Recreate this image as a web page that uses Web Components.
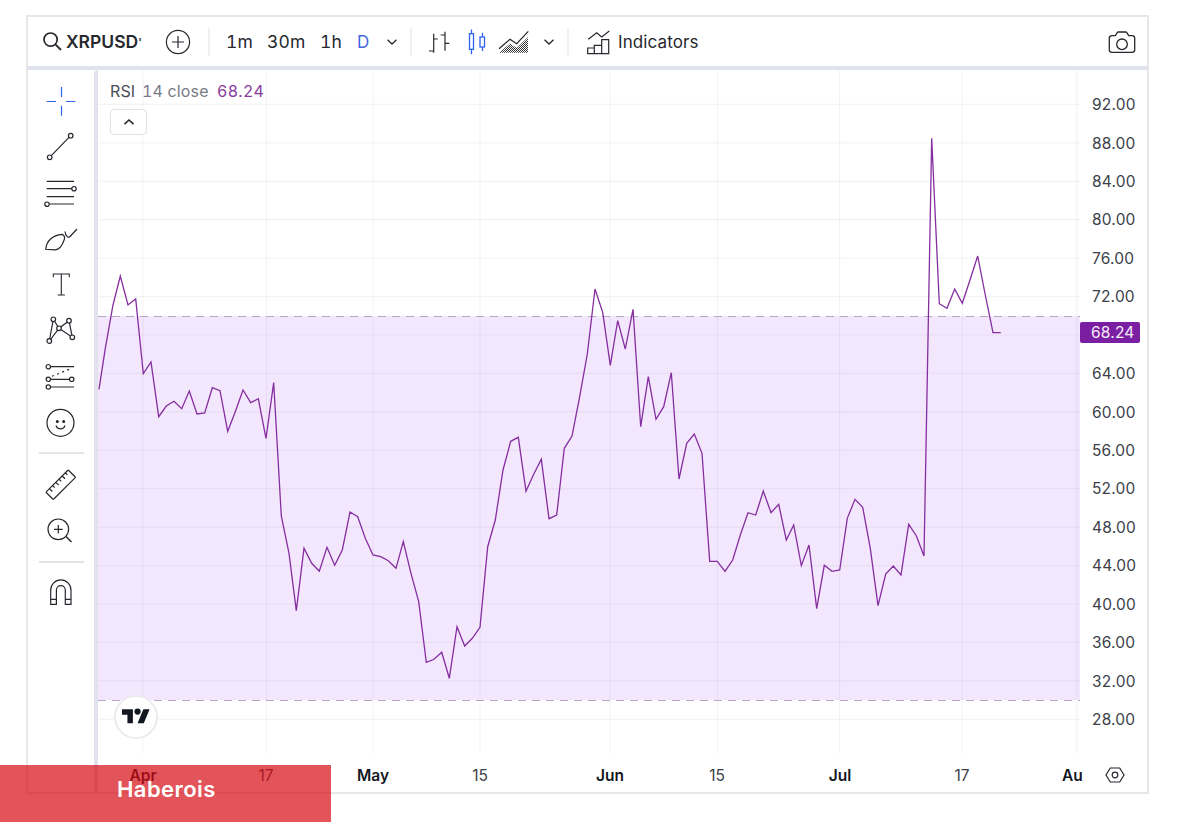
<!DOCTYPE html>
<html lang="en">
<head>
<meta charset="utf-8">
<title>XRPUSD RSI</title>
<style>
html,body{margin:0;padding:0;background:#fff;height:823px;overflow:hidden;font-family:Inter,"Liberation Sans",sans-serif}
</style>
</head>
<body>
<tv-page>
  <tv-widget>
    <tv-topbar slot="top"></tv-topbar>
    <tv-sidebar slot="side"></tv-sidebar>
    <tv-pane slot="pane"></tv-pane>
    <tv-price-axis slot="price"></tv-price-axis>
    <tv-time-axis slot="time"></tv-time-axis>
  </tv-widget>
  <tv-banner>Haberois</tv-banner>
</tv-page>
<script>
const ICONS = {
 search:[21,21,'<circle cx="8.6" cy="8.6" r="6.6"/><path d="M13.4 13.4 19 19" stroke-width="1.8"/>','1.7'],
 plus:[26,26,'<circle cx="13" cy="13" r="11.6"/><path d="M13 7v12M7 13h12"/>','1.2'],
 chev:[12,8,'<path d="M1.5 1.8 6 6l4.5-4.2"/>','1.3'],
 bars:[22,24,'<path d="M5.7 3.7v19M1 21h4.7M5.7 9h4M17 1.7v19M12.7 5h4.3M17 13.3h4.3"/>','1.2'],
 candles:[19,26,'<g stroke="#2f62ee"><rect x="2.500" y="4.700" width="4" height="15.600"/><path d="M4.500 .5v4.200M4.500 20.300v5"/></g><g stroke="#2f62ee"><rect x="13" y="8" width="4.500" height="10"/><path d="M15.500 3.700V8M15.500 18v4"/></g>','1.3'],
 area:[32,24,'<defs><pattern id="h" width="2" height="2" patternUnits="userSpaceOnUse" stroke="none"><rect width="1" height="1" fill="#333"/><rect x="1" y="1" width="1" height="1" fill="#333"/></pattern></defs><path d="M1 22.700 12 13.500l6.700 4.400L30 7v15.700z" fill="url(#h)" stroke="none"/><path d="M1 18.700 12 9.300l6.700 4.400L30.300 1.300"/>','1.2'],
 ind:[24,25,'<path d="M2.3 10.3 10.7 3.7l5 4.3L23.3 2"/><path d="M1.7 24.7v-5.7h6.6v5.7zM8.3 24.7v-8.4h7.4v8.4zM15.7 24.7v-14h7v14z"/>','1.2'],
 camera:[28,24,'<path d="M4 5.7h3.3L9.2 2.7q.4-.7 1.2-.7h7.2q.8 0 1.2.7l1.9 3H24q2.7 0 2.7 2.6v11.4q0 2.6-2.7 2.6H4q-2.7 0-2.7-2.6V8.300q0-2.600 2.700-2.600z"/><circle cx="14" cy="14.300" r="5.300"/>','1.3'],
 cross:[34,34,'<g stroke="#2f62ee"><path d="M2.700 17.500H12M22 17.500h9.300M17.500 3v10M17.500 21.700v10"/></g>','1.2'],
 line:[34,34,'<path d="M7.300 25.600 25 7.300"/><circle cx="26.700" cy="5.700" r="2.300"/><circle cx="5.700" cy="27.300" r="2.300"/>','1.2'],
 fib:[34,34,'<path d="M2.700 5.300H30M2.700 12.700H28M2.700 20.700H30M5 28H30"/><circle cx="30" cy="12.700" r="2.200" fill="#fff"/><circle cx="3" cy="28.200" r="2.200" fill="#fff"/>','1.2'],
 brush:[36,34,'<path d="M2.700 27.300C3.500 20 8 13.500 19.300 12.300C22 14 21.800 16 21.300 17.500C19.500 23 16 27.700 12 27.800Z"/><path d="M22 9.500C22.500 14 25 16.500 27 14.500L34 7"/>','1.2'],
 text:[34,34,'<path d="M9.300 9.300V6h16v3.300M17.300 6v21M13.700 27h7.200"/>','1.1'],
 nodes:[34,34,'<path d="M5.300 27 9.300 5.300 15 14.300 25 6.700 28.300 23.300 15 14.300 5.300 27"/><g fill="#fff"><circle cx="9.300" cy="5.300" r="2.300"/><circle cx="25" cy="6.700" r="2.300"/><circle cx="15" cy="14.300" r="2.300"/><circle cx="28.300" cy="23.300" r="2.300"/><circle cx="5.300" cy="27" r="2.300"/></g>','1.2'],
 pattern:[34,34,'<path d="M6.500 6.700H30M4.300 19.300H25.500M6.500 27H30"/><path d="M8 16.300 27.700 8.300" stroke-dasharray="2 3.500"/><g fill="#fff"><circle cx="4.300" cy="6.700" r="2.200"/><circle cx="4.300" cy="19.300" r="2.200"/><circle cx="27.700" cy="19.300" r="2.200"/><circle cx="4.300" cy="27" r="2.200"/></g>','1.2'],
 smile:[34,34,'<circle cx="16.500" cy="16.800" r="13.500"/><path d="M12 19.500c1.500 4.500 7.500 4.500 9 0"/><circle cx="13.300" cy="15.500" r=".9" fill="#222"/><circle cx="19.700" cy="15.500" r=".9" fill="#222"/>','1.2'],
 ruler:[34,34,'<g transform="rotate(-45 16.700 16.800)"><rect x="1" y="11.600" width="31.500" height="10.400" rx=".8"/><path d="M6 11.600v4M10.500 11.600v3M15 11.600v4M19.500 11.600v3M24 11.600v4M28.500 11.600v3"/></g>','1.2'],
 zoom:[34,34,'<circle cx="14.300" cy="15.300" r="10.300"/><path d="M22 22.500 27.500 28" stroke-width="1.500"/><path d="M14.300 11v8.600M10 15.300h8.600"/>','1.2'],
 magnet:[34,34,'<path d="M6.700 28.300V14a10.150 10.150 0 0 1 20.300 0v14.300h-5.700V14a4.450 4.450 0 0 0-8.900 0v14.300zM6.700 23.300h5.700M21.300 23.300H27"/>','1.2'],
 hex:[20,16,'<path d="M5.300 1h9.400L19 8l-4.300 7H5.300L1 8z"/><circle cx="10" cy="8" r="2.800"/>','1.2']
};
class TvIcon extends HTMLElement{
  connectedCallback(){
    const [w,h,body,sw]=ICONS[this.getAttribute('name')];
    const r=this.shadowRoot||this.attachShadow({mode:'open'});
    r.innerHTML=`<style>:host{display:inline-flex;flex:none;width:${w}px;height:${h}px;color:#222}svg{display:block;overflow:visible}</style>
    <svg width="${w}" height="${h}" viewBox="0 0 ${w} ${h}" fill="none" stroke="#26282e" stroke-width="${sw}">${body}</svg>`;
  }
}
customElements.define('tv-icon',TvIcon);

class TvPage extends HTMLElement{
  constructor(){super();this.attachShadow({mode:'open'}).innerHTML=`<style>
  :host{display:block;position:relative;width:1200px;height:823px;box-sizing:border-box;padding:15px 0 0 26px;overflow:hidden;
    font-family:Inter,"Liberation Sans",sans-serif}
  </style><slot></slot>`}
}
customElements.define('tv-page',TvPage);

class TvWidget extends HTMLElement{
  constructor(){super();this.attachShadow({mode:'open'}).innerHTML=`<style>
  :host{display:grid;box-sizing:border-box;width:1123px;height:779px;border:2px solid #e6e7eb;background:#fff;
    grid-template-columns:66px 4px 982px 1fr;grid-template-rows:49px 4px 685px 1fr}
  .top{grid-column:1/-1}
  .hsep{grid-column:1/-1;background:#e0e3eb}
  .vsep{grid-row:3/5;background:#e0e3eb;border-radius:4px 0 0 0}
  .side{grid-row:3/5;grid-column:1}
  .time{grid-column:3/5;grid-row:4;min-width:0}
  </style>
  <div class="top"><slot name="top"></slot></div>
  <div class="hsep"></div>
  <div class="side"><slot name="side"></slot></div>
  <div class="vsep"></div>
  <div><slot name="pane"></slot></div>
  <div><slot name="price"></slot></div>
  <div class="time"><slot name="time"></slot></div>`}
}
customElements.define('tv-widget',TvWidget);

class TvTopbar extends HTMLElement{
  constructor(){super();this.attachShadow({mode:'open'}).innerHTML=`<style>
  :host{display:flex;align-items:center;height:49px;box-sizing:border-box;padding:0 11px 0 14px;color:#26282e;font-size:17px;letter-spacing:.1px}
  .sym{font-weight:600;margin-left:3px;width:76px;white-space:nowrap;font-size:17.500px;letter-spacing:0}
  .sym small{font-size:11px;font-weight:600;vertical-align:2px}
  .div{width:2px;height:28px;background:#eff0f3;flex:none}
  .t{flex:none}
  .w{font-variant-numeric:tabular-nums;font-size:17.500px}
  .spacer{flex:1}
  tv-icon{flex:none}
  .blue{color:#3f68e0}
  </style>
  <tv-icon name="search"></tv-icon>
  <span class="sym">XRPUSD<small>'</small></span>
  <tv-icon name="plus" style="margin-left:23px"></tv-icon>
  <span class="div" style="margin-left:17px"></span>
  <span class="t w" style="margin-left:16px;width:26px">1m</span>
  <span class="t w" style="margin-left:15px;width:37px">30m</span>
  <span class="t w" style="margin-left:16px;width:21px">1h</span>
  <span class="t blue" style="margin-left:16px;width:12px">D</span>
  <tv-icon name="chev" style="margin-left:17px"></tv-icon>
  <span class="div" style="margin-left:12px"></span>
  <tv-icon name="bars" style="margin-left:16px"></tv-icon>
  <tv-icon name="candles" style="margin-left:17px"></tv-icon>
  <tv-icon name="area" style="margin-left:12px"></tv-icon>
  <tv-icon name="chev" style="margin-left:13px"></tv-icon>
  <span class="div" style="margin-left:12px"></span>
  <tv-icon name="ind" style="margin-left:17px"></tv-icon>
  <span class="t" style="margin-left:8px">Indicators</span>
  <span class="spacer"></span>
  <tv-icon name="camera"></tv-icon>`}
}
customElements.define('tv-topbar',TvTopbar);

class TvSidebar extends HTMLElement{
  constructor(){super();
   const row=n=>`<div class="r"><tv-icon name="${n}"></tv-icon></div>`;
   this.attachShadow({mode:'open'}).innerHTML=`<style>
  :host{display:flex;flex-direction:column;box-sizing:border-box;height:100%;padding-top:8px;align-items:stretch}
  .r{height:46px;display:flex;align-items:center;justify-content:center;}
  .d{height:2px;margin:0 10px 0 11px;background:#e4e5ea;flex:none}
  </style>
  ${['cross','line','fib','brush','text','nodes','pattern','smile'].map(row).join('')}
  <div class="d" style="margin-top:6px;margin-bottom:8px"></div>
  ${['ruler','zoom'].map(row).join('')}
  <div class="d" style="margin-top:7px;margin-bottom:7px"></div>
  ${row('magnet')}`}
}
customElements.define('tv-sidebar',TvSidebar);

const GROUPS=[
 [95,260,[12,388,31,265,54,135,76,48,99,135,122,117,145,341,168,306,191,470,214,438,237,424,260,446,283,393,306,462,329,459,352,383,375,392,398,514,421,455,444,390,467,428,490,416,513,535,536,368,559,768,582,880,604,1052,627,865,650,910,673,934,696,862,719,916,742,870,765,756]],
 [350,280,[23,710,46,775,69,825,92,830,115,842,138,865,160,785,183,880,206,965,229,1147,252,1138,275,1117,298,1195,321,1040,344,1098,367,1075,390,1042,413,800,436,720,459,570,482,484,505,472,528,634,551,583,574,538,597,716,620,705,643,505,666,468,689,350,712,222,735,27,758,97,781,256,803,122,826,207,849,88,872,440,895,290,918,418,941,380,964,278,987,597]],
 [670,420,[50,70,73,42,96,100,119,424,142,424,165,454,188,420,211,345,234,278,257,285,280,213,303,278,326,253,349,360,371,315,394,437,417,375,440,566,463,436,486,454,509,450,532,295,555,238,578,262,601,385,624,557,647,462,670,438,693,465,716,313,739,347,762,408]],
 [900,120,[95,55,118,551,141,565,164,507,187,550,210,480,233,408,256,525,279,638,302,638]]
];
class TvPane extends HTMLElement{
  constructor(){super();
   const OX=98,OY=70;
   const pts=[];
   for(const [ox,oy,a] of GROUPS) for(let i=0;i<a.length;i+=2)
     pts.push((ox+a[i]/3-OX).toFixed(1)+','+(oy+a[i+1]/3-OY).toFixed(1));
   let grid='';
   for(let k=0;k<17;k++){const y=104.4+38.43*k-OY;grid+=`<path d="M0 ${y.toFixed(1)}H982"/>`}
   for(const x of [143,266.500,373,480,610,717.500,839.500,962.300,1076.800]) grid+=`<path d="M${x-OX} 0V683"/>`;
   this.attachShadow({mode:'open'}).innerHTML=`<style>
  :host{display:block;position:relative;width:982px;height:685px;overflow:hidden}
  svg{display:block}
  .legend{position:absolute;left:12px;top:12px;display:flex;font-size:16px;line-height:19px;color:#787b86;white-space:nowrap;letter-spacing:.15px;font-variant-numeric:tabular-nums}
  .legend b{font-weight:400;color:#4b4e58;width:32px}
  .legend span{width:75px}
  .legend i{font-style:normal;color:#8a3a9e;letter-spacing:.3px}
  .fold{position:absolute;left:12px;top:39px;box-sizing:border-box;width:37px;height:26px;border:1px solid #dfe1e6;border-radius:4px;background:#fff;display:flex;align-items:center;justify-content:center}
  .logo{position:absolute;left:16px;top:625px;box-sizing:border-box;width:44px;height:44px;border-radius:50%;background:#fff;border:2px solid #ebecef;display:flex;align-items:center;justify-content:center}
  </style>
  <svg width="982" height="685" viewBox="0 0 982 685">
    <rect x="0" y="246" width="982" height="384" fill="#f3e7fd"/>
    <g stroke="rgba(42,46,57,.05)" stroke-width="1.200" fill="none">${grid}</g>
    <g stroke="#b8a6c4" stroke-width="1" stroke-dasharray="8 6" fill="none"><path d="M0 246.500H982M0 630.500H982"/></g>
    <polyline points="${pts.join(' ')}" fill="none" stroke="#852ea0" stroke-width="1.300" stroke-linejoin="miter"/>
  </svg>
  <div class="legend"><b>RSI</b><span>14 close</span><i>68.24</i></div>
  <div class="fold"><svg width="12" height="8" viewBox="0 0 12 8" fill="none" stroke="#26282e" stroke-width="1.600"><path d="M1.500 6.200 6 2l4.500 4.200"/></svg></div>
  <div class="logo"><svg width="28" height="22" viewBox="0 0 36 28" fill="#131722"><path d="M14 22H7V11H0V4h14v18ZM28 22h-8l7.500-18h8L28 22Z"/><circle cx="20" cy="7" r="4"/></svg></div>`}
}
customElements.define('tv-pane',TvPane);

class TvPriceAxis extends HTMLElement{
  constructor(){super();
   const labels=[];for(let v=92;v>=28;v-=4)labels.push(`<div class="p">${v===68?'':v.toFixed(2)}</div>`);
   this.attachShadow({mode:'open'}).innerHTML=`<style>
  :host{display:flex;flex-direction:column;position:relative;box-sizing:border-box;height:685px;padding-top:16.200px;color:#3c3f49;font-size:15.500px;letter-spacing:.2px}
  .p{height:38.430px;line-height:38.430px;padding-left:12px;flex:none;white-space:nowrap}
  .tag{position:absolute;left:0;top:252px;box-sizing:border-box;width:60px;height:21px;line-height:21px;padding-left:11px;background:#7b1fa2;color:#f6ecfa;border-radius:2px;font-size:15.500px}
  </style>${labels.join('')}<div class="tag">68.24</div>`}
}
customElements.define('tv-price-axis',TvPriceAxis);

class TvTimeAxis extends HTMLElement{
  constructor(){super();
   const OX=98;
   const ticks=[['Apr',143,1],['17',266,0],['May',373,1],['15',480,0],['Jun',610,1],['15',717,0],['Jul',840,1],['17',962,0]];
   this.attachShadow({mode:'open'}).innerHTML=`<style>
  :host{display:flex;align-items:center;justify-content:flex-end;position:relative;height:100%;box-sizing:border-box;padding-top:2px}
  svg.t{position:absolute;left:0;top:0}
  text{font-family:Inter,"Liberation Sans",sans-serif;font-size:15.500px;fill:#3c3f49}
  .b{font-weight:600;fill:#131722}
  tv-icon{margin-right:22px;position:relative}
  </style>
  <svg class="t" width="1049" height="38" viewBox="0 0 1049 38">
  ${ticks.map(([s,x,b])=>`<text x="${x-OX}" y="26" text-anchor="middle" class="${b?'b':''}">${s}</text>`).join('')}
  <text x="964" y="26" class="b">Au</text>
  </svg>
  <tv-icon name="hex"></tv-icon>`}
}
customElements.define('tv-time-axis',TvTimeAxis);

class TvBanner extends HTMLElement{
  constructor(){super();this.attachShadow({mode:'open'}).innerHTML=`<style>
  :host{position:absolute;left:0;top:765px;width:331px;height:57px;box-sizing:border-box;padding:10px 0 0 117px;background:rgba(213,12,18,.7);color:#fff;font-size:22px;font-weight:600;line-height:28px;letter-spacing:.45px}
  </style><slot></slot>`}
}
customElements.define('tv-banner',TvBanner);
</script>
</body>
</html>
